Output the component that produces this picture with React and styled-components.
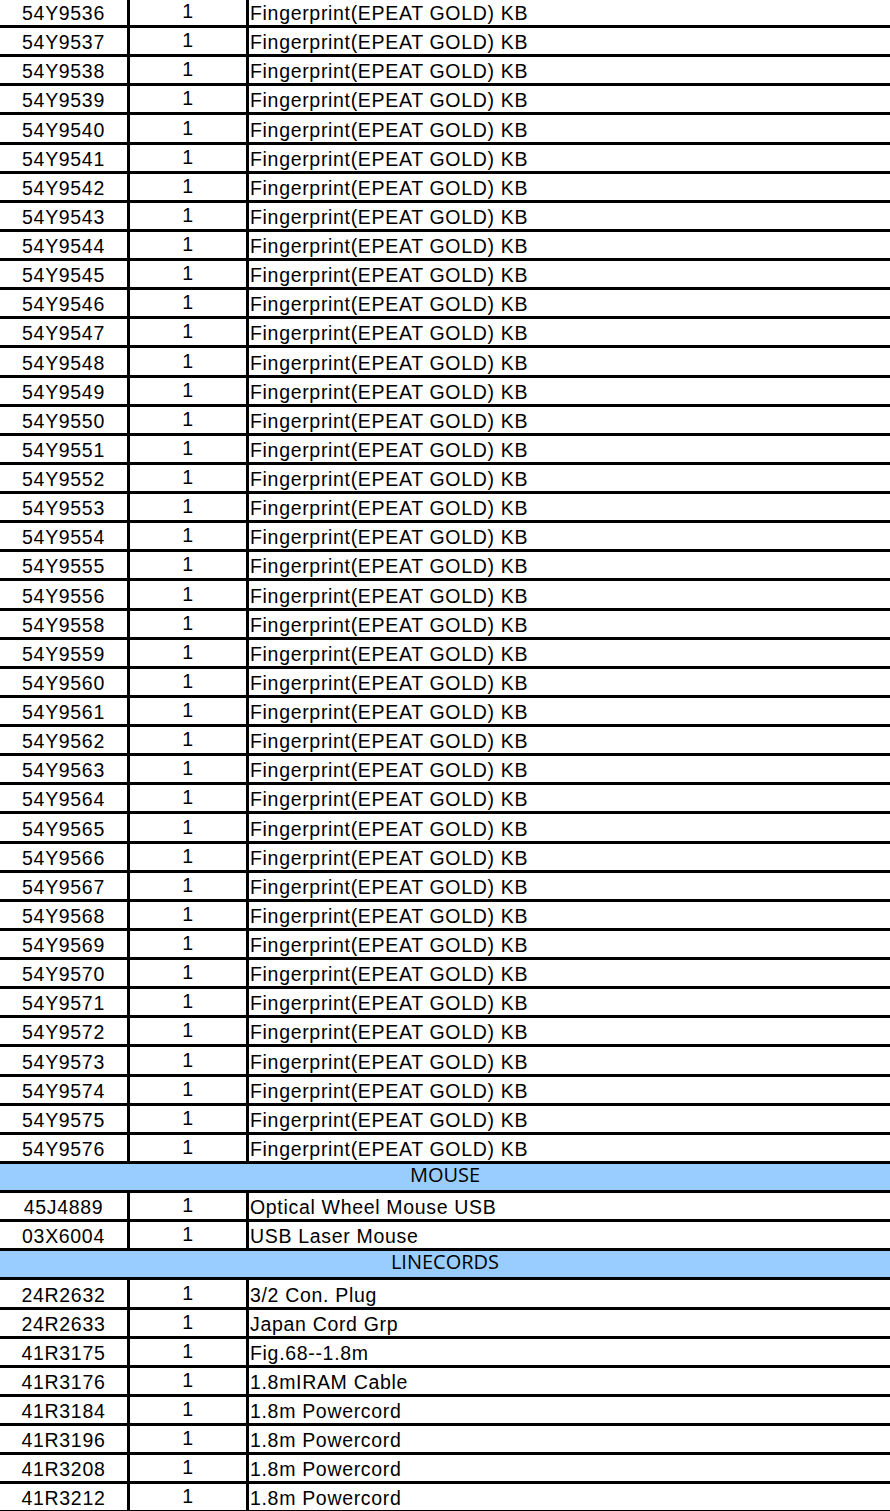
import React from 'react';
import styled, { createGlobalStyle } from 'styled-components';

const KB = 'Fingerprint(EPEAT GOLD) KB';

const keyboardIds = [];
for (let n = 9536; n <= 9576; n++) {
  if (n !== 9557) keyboardIds.push(`54Y${n}`);
}

const sections = [
  { title: null, items: keyboardIds.map((id) => ({ id, qty: 1, desc: KB })) },
  {
    title: 'MOUSE',
    items: [
      { id: '45J4889', qty: 1, desc: 'Optical Wheel Mouse USB' },
      { id: '03X6004', qty: 1, desc: 'USB Laser Mouse' },
    ],
  },
  {
    title: 'LINECORDS',
    items: [
      { id: '24R2632', qty: 1, desc: '3/2 Con. Plug' },
      { id: '24R2633', qty: 1, desc: 'Japan Cord Grp' },
      { id: '41R3175', qty: 1, desc: 'Fig.68--1.8m' },
      { id: '41R3176', qty: 1, desc: '1.8mIRAM Cable' },
      { id: '41R3184', qty: 1, desc: '1.8m Powercord' },
      { id: '41R3196', qty: 1, desc: '1.8m Powercord' },
      { id: '41R3208', qty: 1, desc: '1.8m Powercord' },
      { id: '41R3212', qty: 1, desc: '1.8m Powercord' },
    ],
  },
];

export default function App() {
  return (
    <>
      <GlobalStyle />
      <Sheet>
        {sections.map((section, i) => (
          <React.Fragment key={i}>
            {section.title && <SectionRow>{section.title}</SectionRow>}
            {section.items.map((item) => (
              <Row key={item.id}>
                <IdCell>{item.id}</IdCell>
                <QtyCell>{item.qty}</QtyCell>
                <DescCell>{item.desc}</DescCell>
              </Row>
            ))}
          </React.Fragment>
        ))}
      </Sheet>
    </>
  );
}

// ======================== Styled Components ========================
const GlobalStyle = createGlobalStyle`
  html, body {
    margin: 0;
    padding: 0;
    background: #ffffff;
    overflow: hidden;
  }
`;

const Sheet = styled.div`
  display: flex;
  flex-direction: column;
  width: 890px;
  margin-top: -1.14px;
  font-family: 'Liberation Sans', Arial, sans-serif;
  font-size: 19.5px;
  letter-spacing: 0.68px;
  color: #000000;
`;

const Row = styled.div`
  display: grid;
  grid-template-columns: 130px 119px 1fr;
  height: 26.14px;
  border-bottom: 3px solid #000000;
`;

const Cell = styled.div`
  display: flex;
  align-items: flex-end;
  white-space: nowrap;
  overflow: hidden;
  line-height: 22px;
  padding-bottom: 1px;
`;

const IdCell = styled(Cell)`
  justify-content: center;
  border-right: 3px solid #000000;
`;

const QtyCell = styled(Cell)`
  justify-content: center;
  padding-bottom: 3px;
  border-right: 3px solid #000000;
`;

const DescCell = styled(Cell)`
  padding-left: 1px;
`;

const SectionRow = styled.div`
  height: 26.14px;
  border-bottom: 3px solid #000000;
  background: #99ccff;
  text-align: center;
  font-family: 'Open Sans', 'Noto Sans', sans-serif;
  font-size: 20px;
  letter-spacing: 0;
  line-height: 21px;
  color: #000000;
`;
